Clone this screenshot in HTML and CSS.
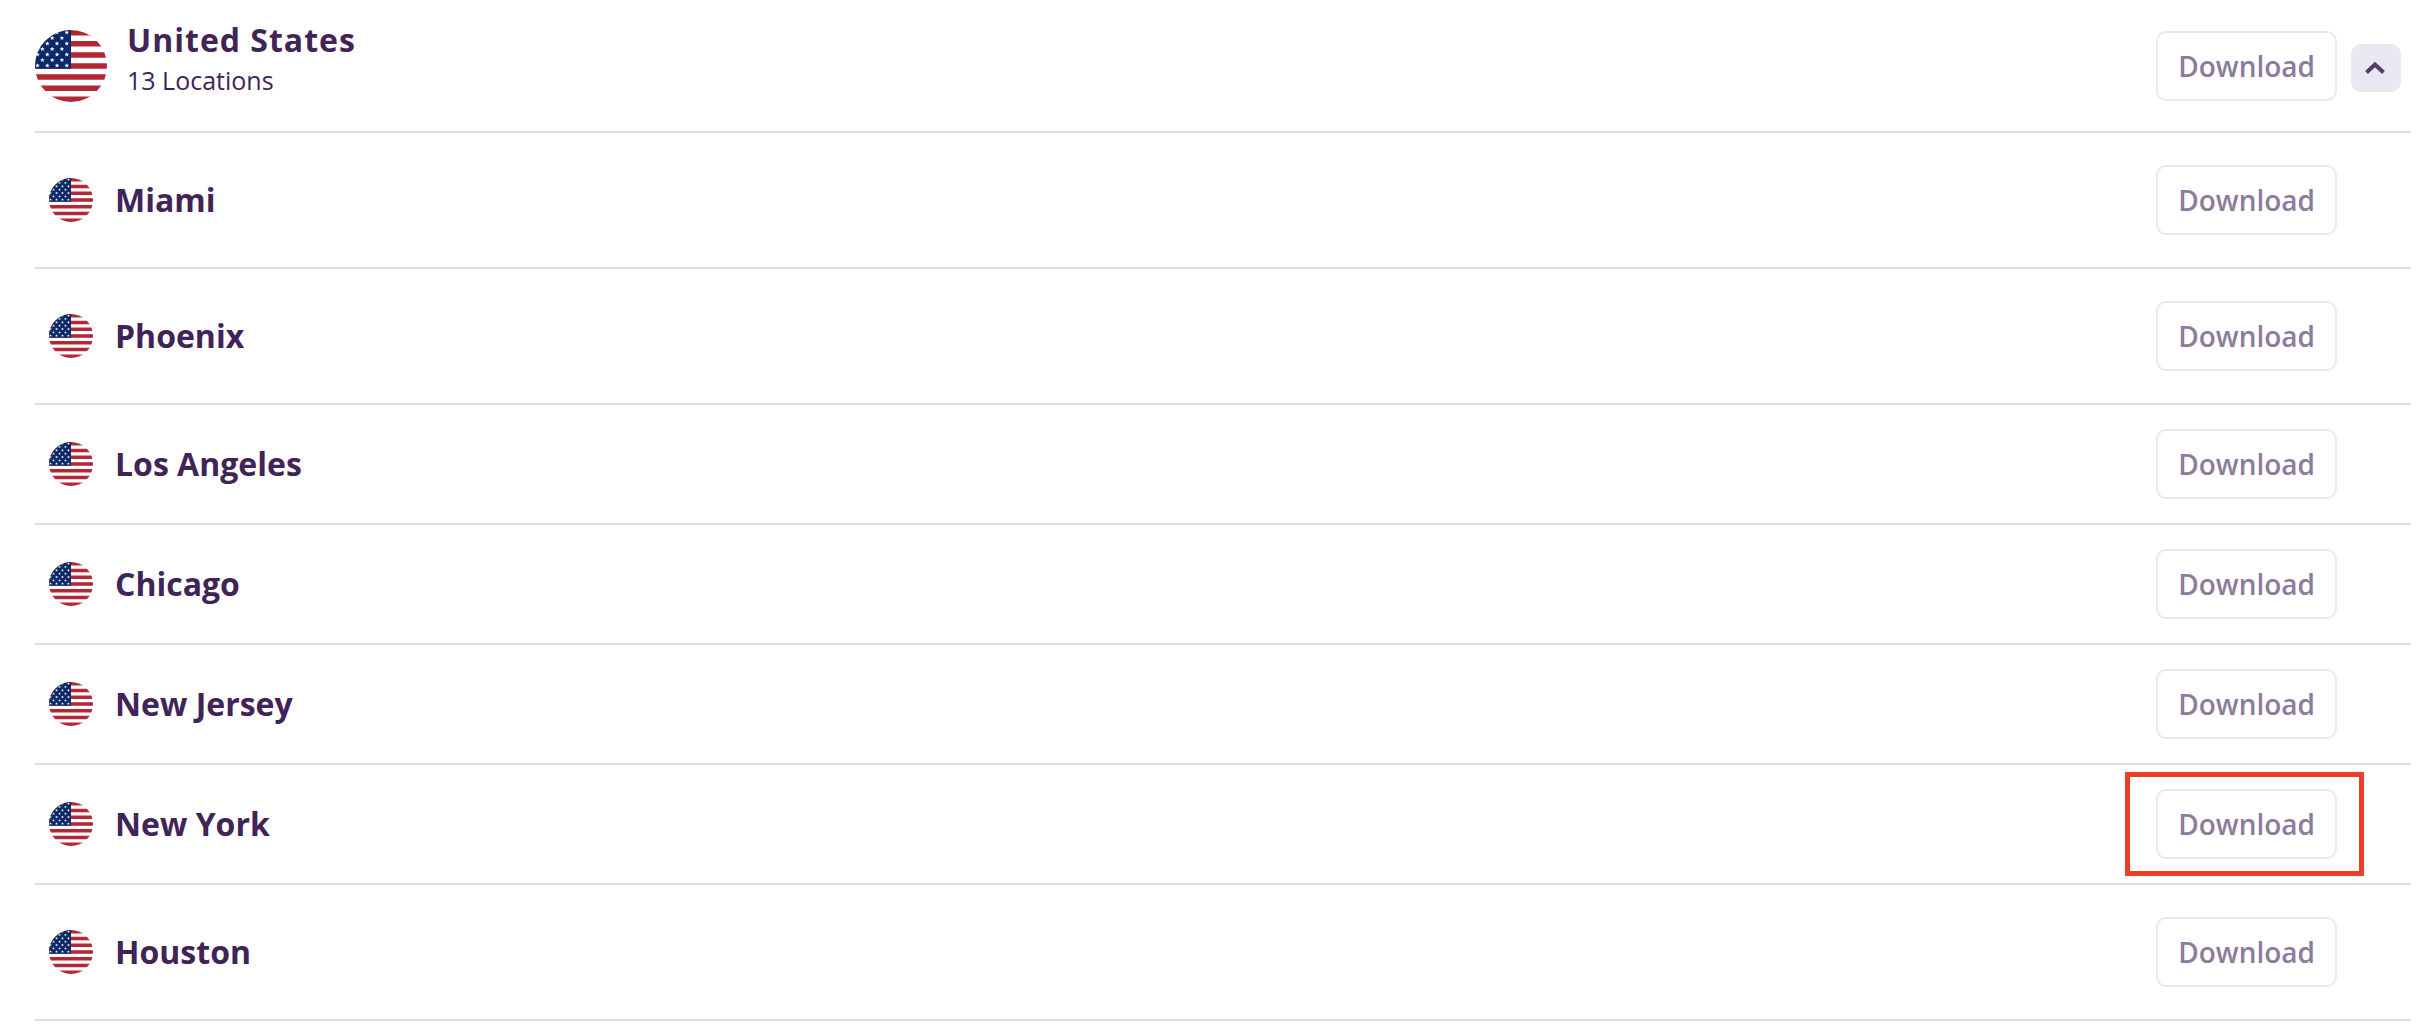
FILE: index.html
```html
<!doctype html>
<html lang="en">

<head>
    <meta charset="utf-8">
    <title>Locations</title>
    <meta name="viewport" content="width=device-width, initial-scale=1">
    <link rel="stylesheet" href="styles.css">
</head>

<body>
    <!-- shared icons -->
    <svg class="sprite" aria-hidden="true">
        <defs>
            <clipPath id="round">
                <circle cx="36" cy="36" r="36" />
            </clipPath>
            <path id="star" fill="#fff" d="M0-2.2.65-.7 2.2-.65 1 .4 1.4 2 0 1.1-1.4 2-1 .4-2.2-.65-.65-.7z" />
            <g id="stars4">
                <use href="#star" x="2.5" />
                <use href="#star" x="12.3" />
                <use href="#star" x="22" />
                <use href="#star" x="31.8" />
            </g>
            <g id="stars3">
                <use href="#star" x="7.4" />
                <use href="#star" x="17.2" />
                <use href="#star" x="26.9" />
            </g>
        </defs>
        <symbol id="flag-us" viewBox="0 0 72 72">
            <g clip-path="url(#round)">
                <rect width="72" height="72" fill="#fff" />
                <path stroke="#b22735" stroke-width="5.54" d="M0 2.77h72M0 13.85h72M0 24.93h72M0 36h72M0 47.08h72M0 58.15h72M0 69.23h72" />
                <rect width="36" height="38.8" fill="#0c2a69" />
                <use href="#stars4" y="2.5" />
                <use href="#stars3" y="8" />
                <use href="#stars4" y="13.5" />
                <use href="#stars3" y="19" />
                <use href="#stars4" y="24.5" />
                <use href="#stars3" y="30" />
                <use href="#stars4" y="35.5" />
            </g>
        </symbol>
    </svg>

    <main class="locations">
        <header class="country">
            <svg class="flag" aria-hidden="true"><use href="#flag-us" /></svg>
            <div class="title">
                <h1>United States</h1>
                <p>13 Locations</p>
            </div>
            <button type="button" class="download">Download</button>
            <button type="button" class="toggle" aria-label="Hide locations" aria-expanded="true">
                <svg viewBox="0 0 20 12" aria-hidden="true"><path d="M1.500 10.500 10 2.500l8.500 8" /></svg>
            </button>
        </header>

        <ul class="cities">
            <li class="city tall">
                <svg class="flag" aria-hidden="true"><use href="#flag-us" /></svg>
                <h2>Miami</h2>
                <button type="button" class="download">Download</button>
            </li>
            <li class="city tall">
                <svg class="flag" aria-hidden="true"><use href="#flag-us" /></svg>
                <h2>Phoenix</h2>
                <button type="button" class="download">Download</button>
            </li>
            <li class="city">
                <svg class="flag" aria-hidden="true"><use href="#flag-us" /></svg>
                <h2>Los Angeles</h2>
                <button type="button" class="download">Download</button>
            </li>
            <li class="city">
                <svg class="flag" aria-hidden="true"><use href="#flag-us" /></svg>
                <h2>Chicago</h2>
                <button type="button" class="download">Download</button>
            </li>
            <li class="city">
                <svg class="flag" aria-hidden="true"><use href="#flag-us" /></svg>
                <h2>New Jersey</h2>
                <button type="button" class="download">Download</button>
            </li>
            <li class="city">
                <svg class="flag" aria-hidden="true"><use href="#flag-us" /></svg>
                <h2>New York</h2>
                <button type="button" class="download marked">Download</button>
            </li>
            <li class="city tall">
                <svg class="flag" aria-hidden="true"><use href="#flag-us" /></svg>
                <h2>Houston</h2>
                <button type="button" class="download">Download</button>
            </li>
        </ul>
    </main>
</body>

</html>
```
FILE: styles.css
```css
* {
    box-sizing: border-box;
}
body {
    margin: 0;
    background-color: #fff;
    color: #412457;
    font-family: "Open Sans", "Noto Sans", sans-serif;
}
h1, h2, p, ul {
    margin: 0;
    padding: 0;
}
.sprite {
    position: absolute;
    width: 0;
    height: 0;
}
.locations {
    padding: 0 21px 0 35px;
}
.flag {
    display: block;
    flex: none;
}

/* country header */
.country {
    display: flex;
    align-items: center;
    padding: 18px 10px 17px 0;
    border-bottom: 2px solid #dedede;
}
.country .flag {
    width: 72px;
    height: 72px;
}
.title {
    flex: 1;
    padding: 0 0 16px 20px;
}
.title h1 {
    font-size: 32px;
    line-height: 44px;
    letter-spacing: 1px;
}
.title p {
    font-size: 25px;
    line-height: 36px;
}

/* city rows */
.cities {
    list-style: none;
}
.city {
    display: flex;
    align-items: center;
    padding: 24px 74px 24px 14px;
    border-bottom: 2px solid #dedede;
}
.city.tall {
    padding-top: 32px;
    padding-bottom: 32px;
}
.city .flag {
    width: 44px;
    height: 44px;
}
.city h2 {
    flex: 1;
    padding-left: 22px;
    font-size: 32px;
    line-height: 44px;
}

/* buttons */
.download {
    position: relative;
    height: 70px;
    padding: 0 20px;
    border: 2px solid #eae8ef;
    border-radius: 10px;
    background-color: #fff;
    color: #8c7b9d;
    font-family: inherit;
    font-size: 28px;
    font-weight: 600;
    cursor: pointer;
}
.marked::after {
    content: "";
    position: absolute;
    top: -19px;
    right: -29px;
    bottom: -19px;
    left: -33px;
    border: 5px solid #eb4026;
}
.toggle {
    display: flex;
    align-items: center;
    justify-content: center;
    width: 50px;
    height: 48px;
    margin: 4px 0 0 14px;
    padding: 0 2px 0 0;
    border: 0;
    border-radius: 10px;
    background-color: #ebe7f2;
    cursor: pointer;
}
.toggle svg {
    width: 20px;
    height: 12px;
    fill: none;
    stroke: #563a6c;
    stroke-width: 4;
}
```
